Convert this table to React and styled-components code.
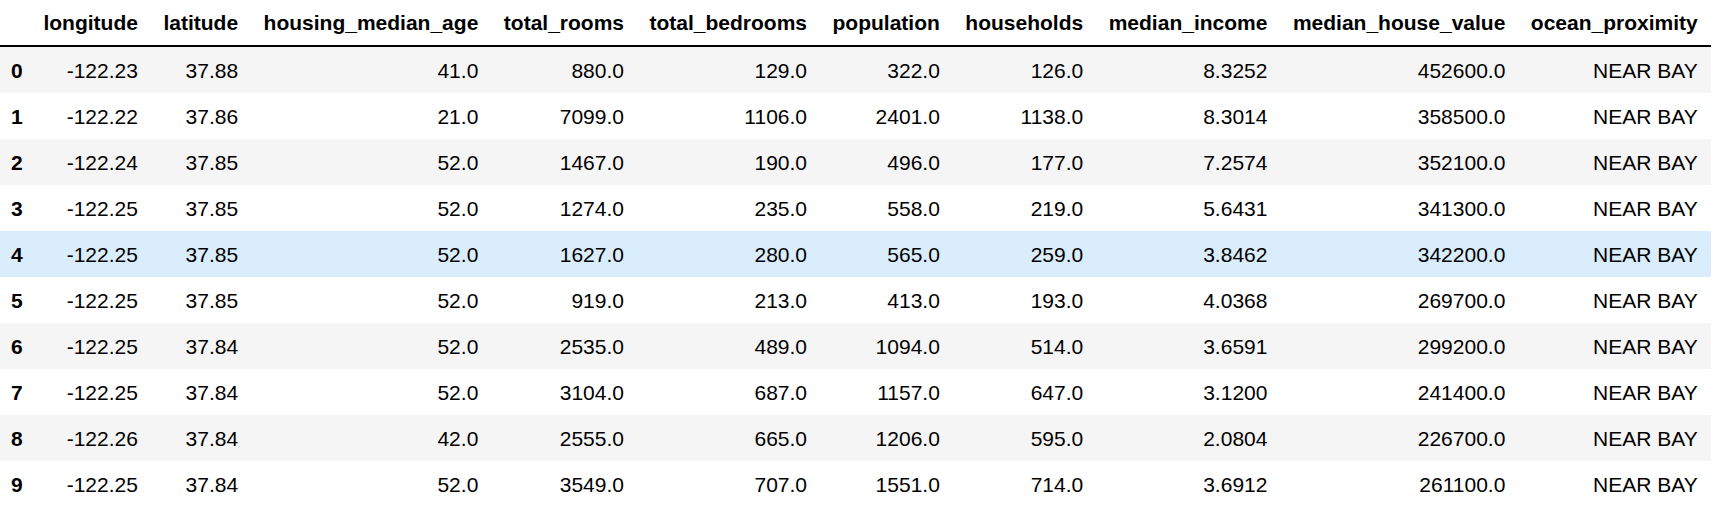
import React from "react";
import styled, { createGlobalStyle } from "styled-components";

const Global = createGlobalStyle`
  html, body { margin: 0; padding: 0; background: #fff; }
  body { font-family: "Liberation Sans", Arial, Helvetica, sans-serif; }
`;

const Table = styled.table`
  border: none;
  border-collapse: collapse;
  border-spacing: 0;
  color: #000;
  font-size: 21px;
  font-family: "Liberation Sans", Arial, Helvetica, sans-serif;
`;

const Head = styled.thead`
  border-bottom: 2px solid #000;
`;

const HeadCell = styled.th`
  text-align: right;
  vertical-align: bottom;
  font-weight: bold;
  padding: ${(p) => (p.$index ? "10px 8px 10px 11px" : "10px 12.75px")};
  line-height: 25px;
  white-space: nowrap;
`;

const Row = styled.tr`
  background: ${(p) =>
    p.$hover ? "rgba(66, 165, 245, 0.2)" : p.$striped ? "#f5f5f5" : "transparent"};
`;

const IndexCell = styled.th`
  text-align: right;
  vertical-align: middle;
  font-weight: bold;
  padding: 10.5px 8px 10.5px 11px;
  line-height: 25px;
`;

const Cell = styled.td`
  text-align: right;
  vertical-align: middle;
  padding: 10.5px 12.75px;
  line-height: 25px;
  white-space: nowrap;
`;

const columns = [
  "longitude",
  "latitude",
  "housing_median_age",
  "total_rooms",
  "total_bedrooms",
  "population",
  "households",
  "median_income",
  "median_house_value",
  "ocean_proximity",
];

const rows = [
  ["-122.23", "37.88", "41.0", "880.0", "129.0", "322.0", "126.0", "8.3252", "452600.0", "NEAR BAY"],
  ["-122.22", "37.86", "21.0", "7099.0", "1106.0", "2401.0", "1138.0", "8.3014", "358500.0", "NEAR BAY"],
  ["-122.24", "37.85", "52.0", "1467.0", "190.0", "496.0", "177.0", "7.2574", "352100.0", "NEAR BAY"],
  ["-122.25", "37.85", "52.0", "1274.0", "235.0", "558.0", "219.0", "5.6431", "341300.0", "NEAR BAY"],
  ["-122.25", "37.85", "52.0", "1627.0", "280.0", "565.0", "259.0", "3.8462", "342200.0", "NEAR BAY"],
  ["-122.25", "37.85", "52.0", "919.0", "213.0", "413.0", "193.0", "4.0368", "269700.0", "NEAR BAY"],
  ["-122.25", "37.84", "52.0", "2535.0", "489.0", "1094.0", "514.0", "3.6591", "299200.0", "NEAR BAY"],
  ["-122.25", "37.84", "52.0", "3104.0", "687.0", "1157.0", "647.0", "3.1200", "241400.0", "NEAR BAY"],
  ["-122.26", "37.84", "42.0", "2555.0", "665.0", "1206.0", "595.0", "2.0804", "226700.0", "NEAR BAY"],
  ["-122.25", "37.84", "52.0", "3549.0", "707.0", "1551.0", "714.0", "3.6912", "261100.0", "NEAR BAY"],
];

export default function App() {
  return (
    <>
      <Global />
      <Table>
        <Head>
          <tr>
            <HeadCell $index />
            {columns.map((c) => (
              <HeadCell key={c}>{c}</HeadCell>
            ))}
          </tr>
        </Head>
        <tbody>
          {rows.map((r, i) => (
            <Row key={i} $striped={i % 2 === 0} $hover={i === 4}>
              <IndexCell>{i}</IndexCell>
              {r.map((v, j) => (
                <Cell key={j}>{v}</Cell>
              ))}
            </Row>
          ))}
        </tbody>
      </Table>
    </>
  );
}
